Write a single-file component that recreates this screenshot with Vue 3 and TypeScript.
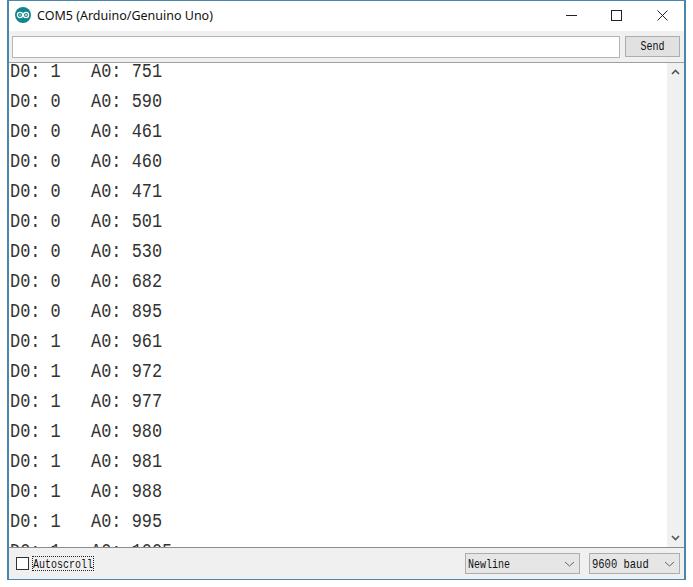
<script setup lang="ts">
const rows: [number, number][] = [
  [1, 751], [0, 590], [0, 461], [0, 460], [0, 471], [0, 501], [0, 530], [0, 682],
  [0, 895], [1, 961], [1, 972], [1, 977], [1, 980], [1, 981], [1, 988], [1, 995], [1, 1005],
];
const rowText = (r: [number, number]): string => `D0: ${r[0]}   A0: ${r[1]}`;
</script>

<template>
  <div class="window">
    <header class="titlebar">
      <svg class="logo" width="16" height="16" viewBox="0 0 16 16">
        <circle cx="8" cy="8" r="8" fill="#12868f" />
        <circle cx="5" cy="8" r="2.6" fill="none" stroke="#fff" stroke-width="1.2" />
        <circle cx="11" cy="8" r="2.6" fill="none" stroke="#fff" stroke-width="1.2" />
        <path d="M4 8h2M10 8h2M11 7v2" stroke="#fff" stroke-width=".8" fill="none" />
      </svg>
      <span class="title">COM5 (Arduino/Genuino Uno)</span>
      <div class="controls">
        <svg width="11" height="11" viewBox="0 0 11 11" class="minimize"><path d="M0 5.500h11" stroke="#222" fill="none" /></svg>
        <svg width="11" height="11" viewBox="0 0 11 11" class="maximize"><rect x=".5" y=".5" width="10" height="10" stroke="#222" fill="none" /></svg>
        <svg width="11" height="11" viewBox="0 0 11 11" class="close"><path d="M.5.5l10 10M10.500.5l-10 10" stroke="#222" fill="none" /></svg>
      </div>
    </header>
    <div class="sendbar">
      <div class="input"></div>
      <button class="send"><span class="tall">Send</span></button>
    </div>
    <div class="main">
      <div class="output">
        <div class="rows">
          <div v-for="(r, i) in rows" :key="i" class="row">{{ rowText(r) }}</div>
        </div>
      </div>
      <div class="scrollbar">
        <svg width="9" height="6" viewBox="0 0 9 6"><path d="M1 5l3.500-3.500L8 5" stroke="#555" stroke-width="1.600" fill="none" /></svg>
        <svg width="9" height="6" viewBox="0 0 9 6"><path d="M1 1l3.500 3.500L8 1" stroke="#555" stroke-width="1.600" fill="none" /></svg>
      </div>
    </div>
    <footer class="statusbar">
      <span class="check"></span>
      <span class="autoscroll"><span class="tall">Autoscroll</span></span>
      <div class="select newline">
        <span class="tall">Newline</span>
        <svg width="11" height="6" viewBox="0 0 11 6"><path d="M1 1l4.500 4L10 1" stroke="#666" fill="none" /></svg>
      </div>
      <div class="select baud">
        <span class="tall">9600 baud</span>
        <svg width="11" height="6" viewBox="0 0 11 6"><path d="M1 1l4.500 4L10 1" stroke="#666" fill="none" /></svg>
      </div>
    </footer>
  </div>
</template>

<style>
html, body { margin: 0; background: #fff; }
</style>

<style scoped>
.window {
  box-sizing: border-box;
  width: 679px;
  height: 580px;
  margin-left: 7px;
  border: 1px solid #4a87ab;
  border-left-width: 2px;
  border-right-width: 2px;
  background: #fff;
  display: flex;
  flex-direction: column;
  overflow: hidden;
}
.titlebar {
  height: 30px;
  box-sizing: border-box;
  padding: 0 0 2px 6px;
  display: flex;
  align-items: center;
  flex: none;
}
.logo { flex: none; }
.title {
  margin-left: 6px;
  font: 12.500px "Noto Sans", "Open Sans", sans-serif;
  color: #111;
}
.controls { margin-left: auto; display: flex; align-items: center; padding-right: 16px; }
.minimize { margin-right: 34px; }
.maximize { margin-right: 35px; }
.sendbar {
  height: 32px;
  box-sizing: border-box;
  flex: none;
  background: #f0f0f0;
  border-bottom: 1px solid #a0a0a0;
  display: flex;
  align-items: center;
  padding: 0 4px 0 3px;
}
.input {
  box-sizing: border-box;
  width: 609px;
  height: 22px;
  background: #fff;
  border: 1px solid #b4b4b4;
}
.send {
  box-sizing: border-box;
  width: 55px;
  height: 21px;
  margin-left: 5px;
  padding: 0;
  background: #e1e1e1;
  border: 1px solid #adadad;
  font: 10px "Liberation Mono", monospace;
  color: #111;
}
.tall {
  display: inline-block;
  transform: scaleY(1.2);
}
.main {
  height: 484px;
  flex: none;
  display: flex;
  overflow: hidden;
}
.output { flex: 1; overflow: hidden; }
.rows { margin-top: -6px; }
.row {
  height: 30px;
  white-space: pre;
  font: 16.900px/30px "Liberation Mono", monospace;
  color: #333;
  padding-left: 1px;
  transform: scaleY(1.25);
  transform-origin: 0 55%;
}
.scrollbar {
  width: 17px;
  flex: none;
  background: #f0f0f0;
  display: flex;
  flex-direction: column;
  align-items: center;
  justify-content: space-between;
  padding: 6px 0;
  box-sizing: border-box;
}
.statusbar {
  flex: 1;
  background: #f0f0f0;
  border-top: 1px solid #8c8c8c;
  display: flex;
  align-items: center;
  padding-left: 7px;
  font: 10px "Liberation Mono", monospace;
  color: #111;
}
.check {
  box-sizing: border-box;
  width: 13px;
  height: 13px;
  background: #fff;
  border: 1px solid #333;
}
.autoscroll {
  margin-left: 4px;
  outline: 1px dotted #222;
  padding: 2px 0 0;
}
.select {
  box-sizing: border-box;
  height: 21px;
  display: flex;
  align-items: center;
  justify-content: space-between;
  padding: 1px 4px 0 2px;
  background: #e6e6e6;
  border: 1px solid #adadad;
}
.newline { width: 115px; margin-left: auto; }
.baud { width: 91px; margin: 0 4px 0 9px; font-size: 10.500px; }
</style>
